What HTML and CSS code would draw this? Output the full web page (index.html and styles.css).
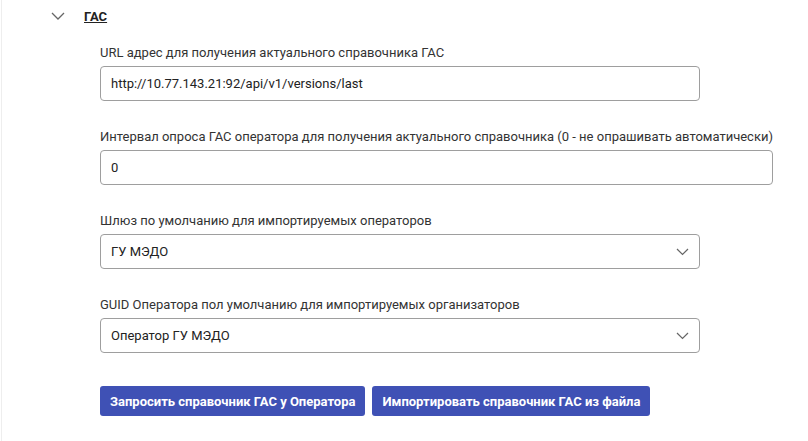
FILE: index.html
```html
<!DOCTYPE html>
<html lang="ru">
<head>
<meta charset="utf-8">
<link rel="stylesheet" href="styles.css">
</head>
<body>
<div class="page">
  <div class="section-head">
    <svg class="chev" width="14" height="8" viewBox="0 0 14 8"><path d="M1 1 L7 7 L13 1" fill="none" stroke="#666" stroke-width="1.3"/></svg>
    <span class="title">ГАС</span>
  </div>
  <div class="fields">
    <div class="field">
      <div class="label">URL адрес для получения актуального справочника ГАС</div>
      <div class="input w600">http://10.77.143.21:92/api/v1/versions/last</div>
    </div>
    <div class="field">
      <div class="label">Интервал опроса ГАС оператора для получения актуального справочника (0 - не опрашивать автоматически)</div>
      <div class="input w673">0</div>
    </div>
    <div class="field">
      <div class="label">Шлюз по умолчанию для импортируемых операторов</div>
      <div class="input w600 select"><span>ГУ МЭДО</span><svg width="13" height="8" viewBox="0 0 13 8"><path d="M1 1 L6.5 6.5 L12 1" fill="none" stroke="#666" stroke-width="1.2"/></svg></div>
    </div>
    <div class="field">
      <div class="label">GUID Оператора пол умолчанию для импортируемых организаторов</div>
      <div class="input w600 select"><span>Оператор ГУ МЭДО</span><svg width="13" height="8" viewBox="0 0 13 8"><path d="M1 1 L6.5 6.5 L12 1" fill="none" stroke="#666" stroke-width="1.2"/></svg></div>
    </div>
    <div class="buttons">
      <button class="btn">Запросить справочник ГАС у Оператора</button>
      <button class="btn">Импортировать справочник ГАС из файла</button>
    </div>
  </div>
</div>
</body>
</html>
```
FILE: styles.css
```css
html, body {
  margin: 0;
  padding: 0;
  background: #fff;
}
body {
  font-family: Roboto, "Noto Sans", sans-serif;
  font-size: 13px;
  color: #333;
}
.page {
  margin-left: 1px;
  border-left: 1px solid #eeeeee;
  height: 441px;
  box-sizing: border-box;
  padding-top: 8px;
}
.section-head {
  display: flex;
  align-items: center;
  height: 16px;
}
.chev {
  margin-left: 49px;
  margin-right: 19px;
}
.title {
  font-weight: 700;
  text-decoration: underline;
  color: #222;
  font-size: 13px;
}
.fields {
  margin-left: 98px;
  padding-top: 21px;
  display: flex;
  flex-direction: column;
}
.field {
  margin-bottom: 28px;
}
.label {
  line-height: 16px;
  color: #333;
  margin-bottom: 5px;
}
.input {
  box-sizing: border-box;
  height: 35px;
  border: 1px solid #9e9e9e;
  border-radius: 4px;
  padding: 0 10px;
  display: flex;
  align-items: center;
  color: #222;
}
.w600 { width: 600px; }
.w673 { width: 673px; }
.select {
  justify-content: space-between;
}
.buttons {
  display: flex;
  gap: 7px;
  margin-top: 5px;
}
.btn {
  height: 30px;
  padding: 0 10px;
  border: none;
  border-radius: 3px;
  background: #3f51b5;
  color: #fff;
  font-family: Roboto, "Noto Sans", sans-serif;
  font-size: 13px;
  font-weight: 700;
}
```
